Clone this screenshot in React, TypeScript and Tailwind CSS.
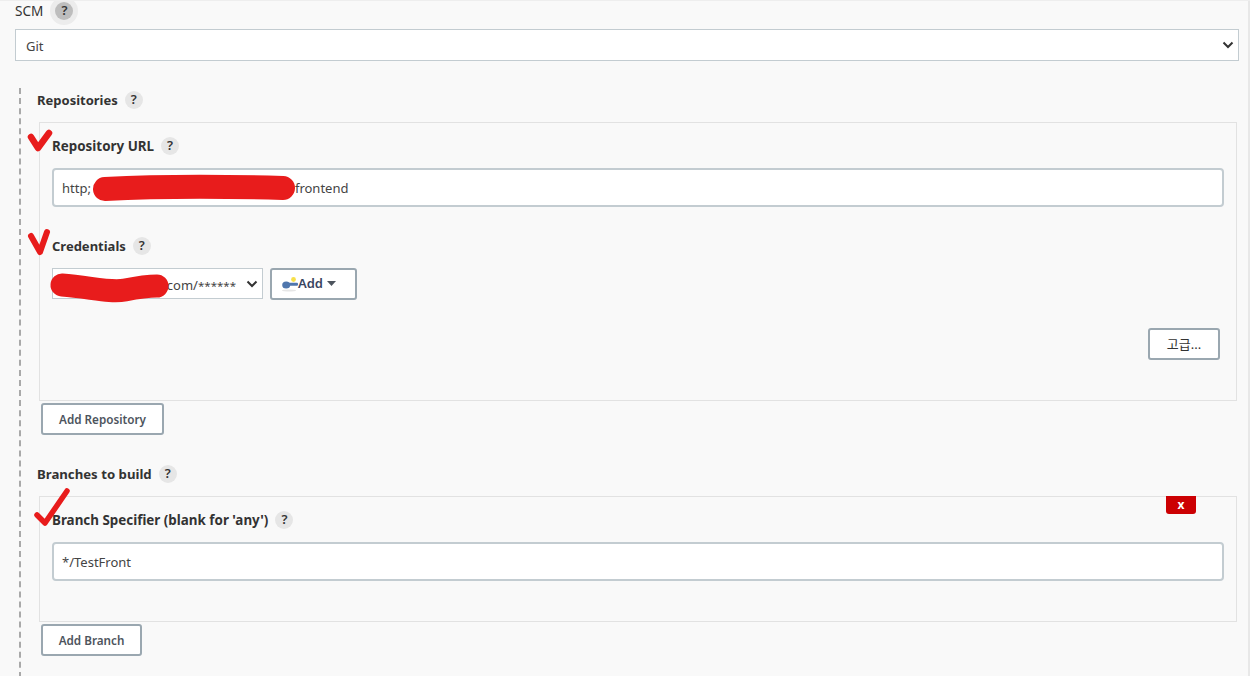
import React from "react";

function Help({ halo = false }: { halo?: boolean }) {
  return (
    <span className={halo ? "flex h-[28px] w-[28px] items-center justify-center rounded-full bg-[#ececec]" : "flex h-[18px] w-[18px] items-center justify-center rounded-full bg-[#e6e6e6]"}>
      <span className={halo ? "flex h-[18px] w-[18px] items-center justify-center rounded-full bg-[#bdbdbd] text-[13px] font-semibold text-[#333]" : "text-[13px] font-semibold text-[#333]"}>?</span>
    </span>
  );
}

function Label({ text, size = "text-[13px]", gap = "gap-[7px]" }: { text: string; size?: string; gap?: string }) {
  return (
    <div className={`flex h-[20px] items-center ${gap}`}>
      <span className={`${size} font-bold leading-[20px] text-[#333]`}>{text}</span>
      <Help />
    </div>
  );
}

function Button({ children, className = "" }: { children: React.ReactNode; className?: string }) {
  return (
    <div className={`flex h-[32px] items-center rounded-[3px] border-2 border-[#9aa7b0] bg-white font-semibold text-[#4d545d] ${className}`}>
      {children}
    </div>
  );
}

function TextBox({ children }: { children?: React.ReactNode }) {
  return (
    <div className="flex h-[39px] w-[1172px] items-center rounded-[4px] border-2 border-[#c3ccd1] bg-white pl-[8px] pt-[2px] text-[13px] text-[#444]">
      {children}
    </div>
  );
}

function Chevron() {
  return (
    <svg width="12" height="8" viewBox="0 0 12 8" className="shrink-0">
      <path d="M1.500 1.500 6 6l4.500-4.500" fill="none" stroke="#333" strokeWidth="2" />
    </svg>
  );
}

function KeyIcon() {
  return (
    <svg width="16" height="16" viewBox="0 0 16 16" className="shrink-0">
      <ellipse cx="7" cy="14.500" rx="7" ry="1" fill="#e6e6e6" />
      <circle cx="11.500" cy="3.500" r="2.400" fill="#f7e04a" />
      <ellipse cx="4.200" cy="9" rx="4" ry="3.500" fill="#4f76ad" />
      <rect x="5" y="6.800" width="11" height="3" rx="1" fill="#4f76ad" />
    </svg>
  );
}

export default function App() {
  return (
    <div
      className="relative h-[676px] w-[1250px] overflow-hidden border-t border-[#eeeeee] bg-[#f9f9f9] pl-[15px] text-[#333]"
      style={{ fontFamily: '"Noto Sans", "Noto Sans CJK KR", sans-serif' }}
    >
      <div className="absolute bottom-0 right-0 top-0 w-[2px] bg-[#e8e8e8]" />

      <div className="flex h-[20px] items-center gap-[7px]">
        <span className="text-[13.600px] leading-[20px] text-[#333]">SCM</span>
        <Help halo />
      </div>

      <div className="mt-[8px] flex h-[32px] w-[1224px] items-center justify-between border border-[#c3ccd1] bg-white pl-[10px] pr-[4px] pt-[4px] text-[13px] text-[#444]">
        <span>Git</span>
        <span className="-mt-[4px]"><Chevron /></span>
      </div>

      <div className="ml-[4px] mt-[27px] h-[600px] border-l-2 border-dashed border-[#a9a9a9] pl-[16px]">
        <div className="pt-[2px]">
          <Label text="Repositories" />
        </div>

        <div className="ml-[2px] mt-[12px] h-[279px] w-[1198px] border border-[#e2e2e2] px-[12px] pt-[13px]">
          <Label text="Repository URL" size="text-[13.400px]" />
          <div className="mt-[12px]">
            <TextBox>
              <span>http;</span>
              <span className="ml-[204px]">frontend</span>
            </TextBox>
          </div>
          <div className="mt-[29px]">
            <Label text="Credentials" />
          </div>
          <div className="mt-[12px] flex items-start gap-[7px]">
            <div className="flex h-[31px] w-[211px] items-center justify-end gap-[10px] border border-[#c3ccd1] bg-white pr-[4px]">
              <span className="pt-[5px] text-[13px] text-[#444]">com/<span className="text-[11.500px]">******</span></span>
              <Chevron />
            </div>
            <Button className="w-[87px] pl-[10px] text-[13px] text-[#39455f]">
              <KeyIcon />
              <span>Add</span>
              <svg width="9" height="5" viewBox="0 0 9 5" className="mb-[2px] ml-[4px]">
                <path d="M0 0h9L4.500 5z" fill="#4d545d" />
              </svg>
            </Button>
          </div>
          <div className="mt-[28px] flex justify-end pr-[4px]">
            <Button className="w-[72px] justify-center pt-[2px] text-[13px] !font-normal !text-[#333]">고급...</Button>
          </div>
        </div>

        <Button className="ml-[4px] mt-[2px] w-[123px] justify-center pt-[1px] text-[11.700px]">Add Repository</Button>

        <div className="mt-[29px]">
          <Label text="Branches to build" size="text-[13.200px]" />
        </div>

        <div className="relative ml-[2px] mt-[12px] h-[126px] w-[1198px] border border-[#e2e2e2] pl-[12px] pt-[13px]">
          <div className="absolute right-[40px] top-[-1px] flex h-[18px] w-[30px] items-center justify-center rounded-b-[3px] bg-[#cc0003] text-[12px] font-bold text-white">
            x
          </div>
          <Label text="Branch Specifier (blank for 'any')" size="text-[13.400px]" />
          <div className="mt-[12px]">
            <TextBox>*/TestFront</TextBox>
          </div>
        </div>

        <Button className="ml-[4px] mt-[2px] w-[101px] justify-center pt-[1px] text-[11.700px]">Add Branch</Button>
      </div>

      <svg className="pointer-events-none absolute left-0 top-0" width="1250" height="676" viewBox="0 0 1250 676">
        <g fill="none" stroke="#e81c1c" strokeLinecap="round" strokeLinejoin="round">
          <path d="M31 136 38 147 49 132" strokeWidth="6.500" />
          <path d="M31 235 40 251 47 231" strokeWidth="6" />
          <path d="M37 514 45 522 67 490" strokeWidth="5.500" />
          <path d="M105 188Q180 184 283 187" strokeWidth="24" />
          <path d="M62 284C90 286 110 292 125 289 140 286 150 285 157 285" strokeWidth="23" />
        </g>
      </svg>
    </div>
  );
}
